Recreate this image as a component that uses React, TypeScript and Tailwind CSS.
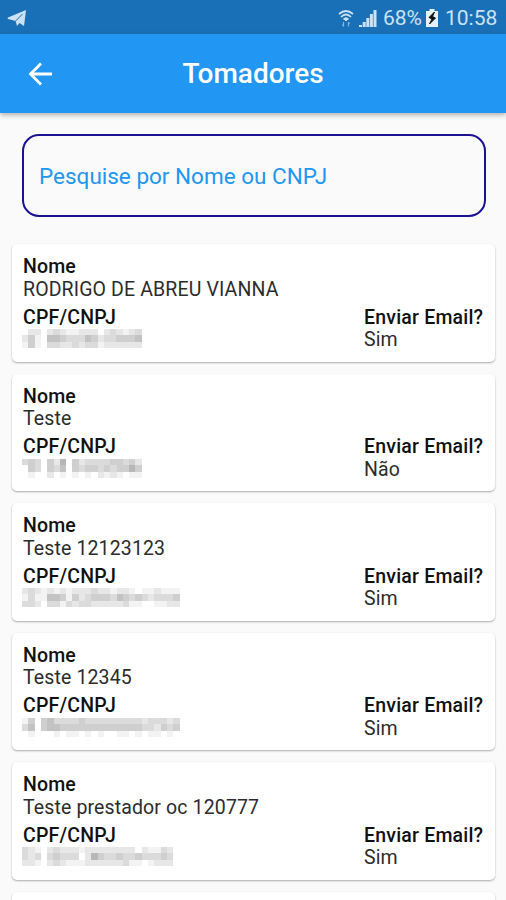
import React from "react";

interface Tomador {
  nome: string;
  enviarEmail: string;
  mask: string[];
}

// each digit is the darkness of one mosaic block over the hidden document
const tomadores: Tomador[] = [
  {
    nome: "RODRIGO DE ABREU VIANNA",
    enviarEmail: "Sim",
    mask: ["0220232112220232123", "2410554333542334445", "1410332232331222222"],
  },
  {
    nome: "Teste",
    enviarEmail: "Não",
    mask: ["34304260423333443420", "04304350434434344640", "01002010101021210110"],
  },
  {
    nome: "Teste 12123123",
    enviarEmail: "Sim",
    mask: ["2321212122232212210112111", "1311554142344435434323334", "3320331323322222311001122"],
  },
  {
    nome: "Teste 12345",
    enviarEmail: "Sim",
    mask: ["1404533334333333333233323", "3504554444444444444332434", "0100010110101001101011010"],
  },
  {
    nome: "Teste prestador oc 120777",
    enviarEmail: "Sim",
    mask: ["321023222122222222021132", "323034333026433433433343", "221023211122222231101222"],
  },
];

function Mosaic({ rows }: { rows: string[] }) {
  return (
    <svg
      width={rows[0].length * 6.3}
      height="19"
      viewBox={`0 0 ${rows[0].length * 6.3} 19`}
      className="-ml-px block"
      shapeRendering="crispEdges"
    >
      {rows.map((row, y) =>
        row
          .split("")
          .map((v, x) => (
            <rect
              key={`${x}-${y}`}
              x={x * 6.3}
              y={y * 6.3}
              width="6.3"
              height="6.3"
              fillOpacity={Number(v) * 0.047}
            />
          ))
      )}
    </svg>
  );
}

function StatusBar() {
  return (
    <div className="flex h-[34px] shrink-0 items-center bg-[#1a70b7] pl-[7px] pr-[9px] pt-[2px] text-[#cde2f3]">
      <svg width="20" height="18" viewBox="0 0 20 18" fill="currentColor">
        <path d="M19 1 17 17 12.500 14 10 17 8.600 12 1 10Q0 9 1 8.500Z" />
        <path d="M8.600 12 15.500 5" stroke="#1a70b7" strokeWidth="1" />
      </svg>
      <div className="ml-auto flex items-center">
        <svg width="18" height="19" viewBox="0 0 18 19" fill="none" stroke="currentColor">
          <path d="M2 5Q9-1 16 5M4 8Q9 3 14 8M6.500 10.500Q9 8 11.500 10.500" strokeWidth="1.700" />
          <path d="M9 12 7.500 10h3Z" fill="currentColor" />
          <path d="M6.500 13v4.500M5.500 15.500l1 2M11.500 17.500V13M12.500 15l-1-2" strokeWidth="1.200" opacity=".6" />
        </svg>
        <svg width="18" height="18" viewBox="0 0 18 18" fill="currentColor" className="ml-[4px]">
          <path d="M0 16h3v2H0ZM3.700 13h3v5h-3ZM7.300 9h3v9h-3ZM10.900 5h3v13h-3ZM14.500 1h3v17h-3Z" />
        </svg>
        <span className="ml-[6px] w-[39px] whitespace-nowrap text-[21px] leading-[26px]">68%</span>
        <svg width="12" height="18" viewBox="0 0 12 18" className="ml-[4px]">
          <path d="M3.500 0h5v2H12v16H0V2h3.500Z" fill="#e6f0f8" />
          <path d="M8.500 3 3 8.500l3 1.500-2.500 5L9.500 9 6.500 7.500Z" fill="#111" stroke="#111" />
        </svg>
        <span className="ml-[7px] w-[52px] whitespace-nowrap text-[21px] leading-[26px]">10:58</span>
      </div>
    </div>
  );
}

function TomadorCard({ tomador }: { tomador: Tomador }) {
  return (
    <div className="h-[117.5px] shrink-0 rounded-[5px] bg-white px-[11px] pt-[12px] text-[19.5px] leading-[22.5px] tracking-[0.13px] text-[#2c2c2c] shadow-[0_1px_2px_rgba(0,0,0,0.32)]">
      <h2 className="font-medium text-[#111]">Nome</h2>
      <p>{tomador.nome}</p>
      <div className="mt-[5.5px] flex justify-between">
        <div>
          <h2 className="font-medium tracking-[0.2px] text-[#111]">CPF/CNPJ</h2>
          <Mosaic rows={tomador.mask} />
        </div>
        <div className="w-[120px] whitespace-nowrap">
          <h2 className="font-medium tracking-[0.2px] text-[#111]">Enviar Email?</h2>
          <p>{tomador.enviarEmail}</p>
        </div>
      </div>
    </div>
  );
}

export default function App() {
  return (
    <div className="flex h-[900px] w-[506px] flex-col overflow-hidden bg-[#fafafa] font-[Roboto,sans-serif]">
      <StatusBar />
      <header className="relative flex h-[79px] shrink-0 items-center justify-center bg-[#2196f3] pt-px text-white shadow-[0_2px_5px_rgba(0,0,0,0.3)]">
        <svg
          width="24"
          height="24"
          viewBox="0 0 24 24"
          fill="none"
          stroke="currentColor"
          strokeWidth="2.8"
          className="absolute left-[28px] top-[28px]"
        >
          <path d="M24 12H2.500M13 1.500 2.500 12 13 22.500" />
        </svg>
        <h1 className="text-[28px] font-medium leading-none">Tomadores</h1>
      </header>
      <div className="ml-[22px] mr-[20px] mt-[21px] shrink-0">
        <input
          className="block h-[83px] w-full rounded-[17px] border-[2.5px] border-[#1a1293] bg-transparent px-[15px] text-[22.5px] outline-none placeholder:text-[#2196f3] placeholder:opacity-100"
          placeholder="Pesquise por Nome ou CNPJ"
        />
      </div>
      <div className="mt-[27px] flex flex-col gap-[12px] pl-[12px] pr-[11px]">
        {tomadores.map((t) => (
          <TomadorCard key={t.nome} tomador={t} />
        ))}
        <div className="h-[117.5px] shrink-0 rounded-[5px] bg-white shadow-[0_1px_2px_rgba(0,0,0,0.32)]" />
      </div>
    </div>
  );
}
